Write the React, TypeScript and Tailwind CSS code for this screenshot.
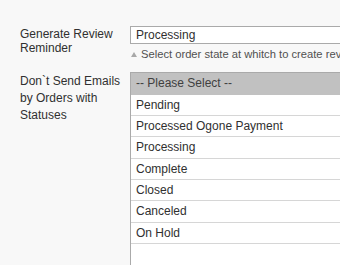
import React from "react";

const options = [
  "Pending",
  "Processed Ogone Payment",
  "Processing",
  "Complete",
  "Closed",
  "Canceled",
  "On Hold",
];

export default function App() {
  return (
    <div
      className="w-[340px] h-[265px] overflow-hidden bg-[#f8f8f8] text-[#303030]"
      style={{ fontFamily: '"Liberation Sans", Arial, sans-serif' }}
    >
      <div className="pt-[26px] flex flex-col gap-[11px]">
        <div className="flex">
          <div className="w-[130px] shrink-0 pl-[20px] pr-[6px] pt-[1px] text-[12px] leading-[14px]">
            Generate Review Reminder
          </div>
          <div className="shrink-0 w-[260px]">
            <div className="h-[18px] border border-[#aaaaaa] bg-white pl-[5px] text-[12px] leading-[16px]">
              Processing
            </div>
            <div className="mt-[3px] flex items-center text-[11.2px] leading-[14px] text-[#505050] whitespace-nowrap">
              <span className="ml-[1px] mr-[4px] w-0 h-0 border-x-[3px] border-x-transparent border-b-[5px] border-b-[#a8a8a8]" />
              <span>Select order state at whitch to create review reminder</span>
            </div>
          </div>
        </div>
        <div className="flex">
          <div className="w-[130px] shrink-0 pl-[20px] pr-[6px] pt-[1px] text-[12px] leading-[17px]">
            Don`t Send Emails by Orders with Statuses
          </div>
          <div className="shrink-0 w-[260px] h-[200px] border border-[#aaaaaa] bg-white">
            <div className="h-[21.67px] bg-[#c1c1c1] pl-[5px] text-[12px] leading-[21px] text-[#404040]">
              -- Please Select --
            </div>
            {options.map((o) => (
              <div
                key={o}
                className="h-[21.33px] border-b border-[#d6d6d6] pl-[5px] text-[12px] leading-[20px]"
              >
                {o}
              </div>
            ))}
          </div>
        </div>
      </div>
    </div>
  );
}
